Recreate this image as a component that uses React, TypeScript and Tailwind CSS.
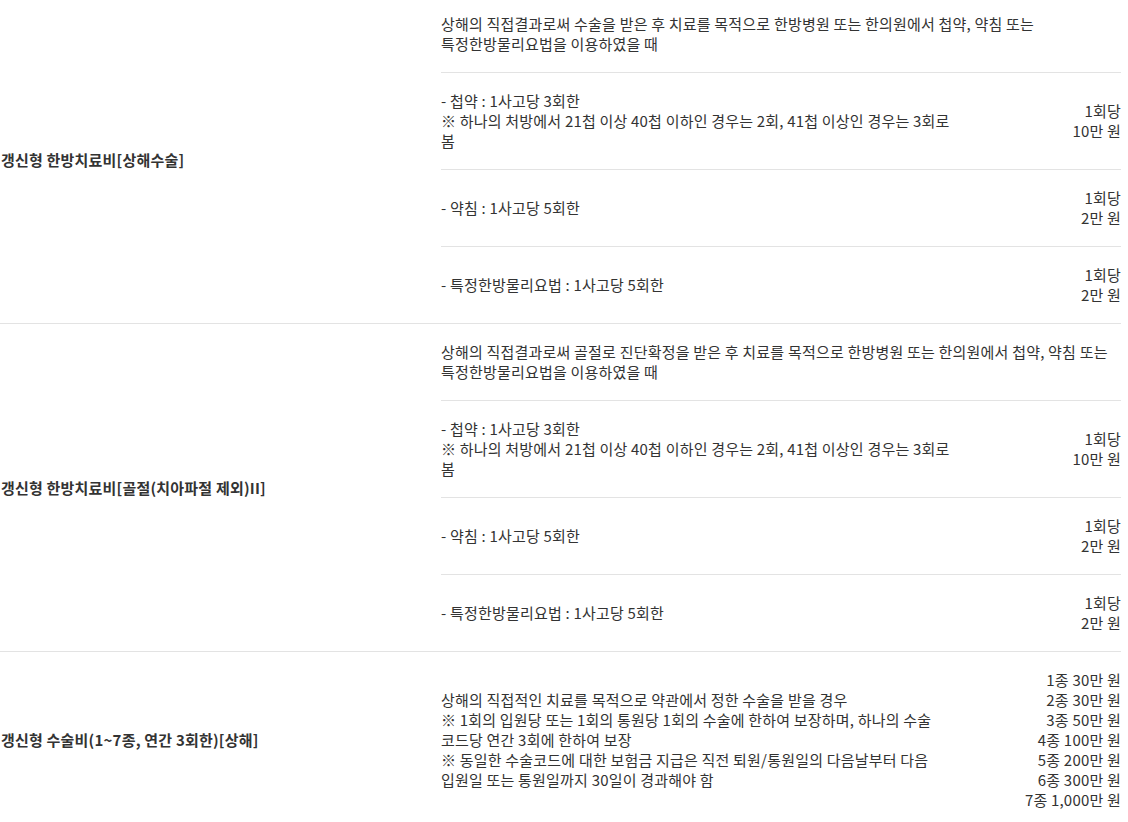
import React from 'react';

interface Item {
  desc: string[];
  amount: string[];
}

interface Section {
  title: string;
  condition?: string;
  items: Item[];
}

const sections: Section[] = [
  {
    title: '갱신형 한방치료비[상해수술]',
    condition:
      '상해의 직접결과로써 수술을 받은 후 치료를 목적으로 한방병원 또는 한의원에서 첩약, 약침 또는 특정한방물리요법을 이용하였을 때',
    items: [
      {
        desc: ['- 첩약 : 1사고당 3회한', '※ 하나의 처방에서 21첩 이상 40첩 이하인 경우는 2회, 41첩 이상인 경우는 3회로 봄'],
        amount: ['1회당', '10만 원']
      },
      { desc: ['- 약침 : 1사고당 5회한'], amount: ['1회당', '2만 원'] },
      { desc: ['- 특정한방물리요법 : 1사고당 5회한'], amount: ['1회당', '2만 원'] }
    ]
  },
  {
    title: '갱신형 한방치료비[골절(치아파절 제외)II]',
    condition:
      '상해의 직접결과로써 골절로 진단확정을 받은 후 치료를 목적으로 한방병원 또는 한의원에서 첩약, 약침 또는 특정한방물리요법을 이용하였을 때',
    items: [
      {
        desc: ['- 첩약 : 1사고당 3회한', '※ 하나의 처방에서 21첩 이상 40첩 이하인 경우는 2회, 41첩 이상인 경우는 3회로 봄'],
        amount: ['1회당', '10만 원']
      },
      { desc: ['- 약침 : 1사고당 5회한'], amount: ['1회당', '2만 원'] },
      { desc: ['- 특정한방물리요법 : 1사고당 5회한'], amount: ['1회당', '2만 원'] }
    ]
  },
  {
    title: '갱신형 수술비(1~7종, 연간 3회한)[상해]',
    items: [
      {
        desc: [
          '상해의 직접적인 치료를 목적으로 약관에서 정한 수술을 받을 경우',
          '※ 1회의 입원당 또는 1회의 통원당 1회의 수술에 한하여 보장하며, 하나의 수술 코드당 연간 3회에 한하여 보장',
          '※ 동일한 수술코드에 대한 보험금 지급은 직전 퇴원/통원일의 다음날부터 다음 입원일 또는 통원일까지 30일이 경과해야 함'
        ],
        amount: ['1종 30만 원', '2종 30만 원', '3종 50만 원', '4종 100만 원', '5종 200만 원', '6종 300만 원', '7종 1,000만 원']
      }
    ]
  }
];

export default function App() {
  return (
    <div
      className="w-[1121px] -mt-[4px] text-[15px] leading-5 tracking-[0.2px] text-[#333] break-keep"
      style={{ fontFamily: '"Noto Sans CJK KR", "Noto Sans", sans-serif' }}
    >
      {sections.map((section, si) => (
        <div key={si} className="grid grid-cols-[441px_1fr] border-b border-[#e3e3e3]">
          {/* Title */}
          <div className="flex items-center font-bold pl-[1px]">{section.title}</div>

          {/* Details */}
          <div>
            {section.condition && <div className="py-[18px]">{section.condition}</div>}
            {section.items.map((item, ii) => (
              <div
                key={ii}
                className={`flex items-center py-[18px] ${
                  section.condition || ii > 0 ? 'border-t border-[#e3e3e3]' : ''
                }`}
              >
                <div className="w-[515px]">
                  {item.desc.map((line, li) => (
                    <div key={li}>{line}</div>
                  ))}
                </div>
                <div className="flex-1 text-right">
                  {item.amount.map((line, li) => (
                    <div key={li}>{line}</div>
                  ))}
                </div>
              </div>
            ))}
          </div>
        </div>
      ))}
    </div>
  );
}
